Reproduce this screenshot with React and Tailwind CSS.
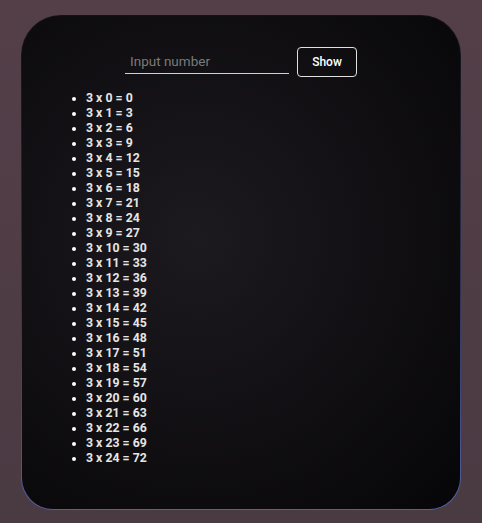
import React, { useState } from 'react';

const MultiplicationTable = () => {
  const [value, setValue] = useState('');
  const [base, setBase] = useState(3);

  const rows = Array.from({ length: 25 }, (_, i) => i);

  const handleShow = () => {
    const n = parseInt(value, 10);
    if (!isNaN(n)) setBase(n);
  };

  return (
    <div className="rounded-t-[40px] rounded-b-[32px] bg-linear-to-b from-[#121118] via-[#2a2e4c] to-[#5260a4] p-px">
      <div className="h-[493px] rounded-t-[39px] rounded-b-[31px] bg-radial-[at_40%_45%] from-[#1c1a1f] to-[#060507] px-6 pt-8">
        {/* Input row */}
        <div className="flex items-start justify-center gap-2">
          <input
            type="text"
            placeholder="Input number"
            value={value}
            onChange={(e) => setValue(e.target.value)}
            className="h-[26px] w-[164px] border-b border-[#d0d0d0] bg-transparent px-[5px] text-[13.5px] text-[#e5e5e5] placeholder-[#7a7a7a] outline-none"
          />
          <button
            onClick={handleShow}
            className="-mt-px h-[30px] w-[60px] rounded-[4px] border border-[#e0e0e0] text-[12px] font-medium text-white"
          >
            Show
          </button>
        </div>

        {/* Results */}
        <ul className="mt-[14px] list-disc pl-10 text-[12.3px] font-bold leading-[15px] text-[#e6e6e6] marker:text-white">
          {rows.map((i) => (
            <li key={i}>
              {base} x {i} = {base * i}
            </li>
          ))}
        </ul>
      </div>
    </div>
  );
};

export default function App() {
  return (
    <div
      className="min-h-[523px] bg-linear-to-b from-[#543f49] to-[#4a3a42] pt-[15px]"
      style={{ fontFamily: 'Roboto, "Liberation Sans", sans-serif' }}
    >
      <div className="mx-auto w-[440px]">
        <MultiplicationTable />
      </div>
    </div>
  );
}
